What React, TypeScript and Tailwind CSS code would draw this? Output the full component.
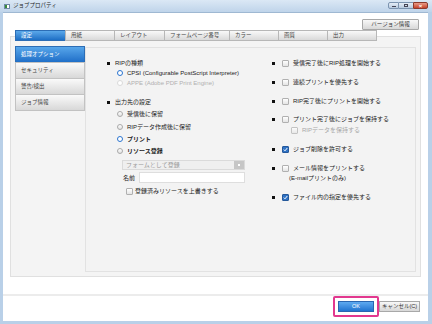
import React from 'react';

const font = "font-['Liberation_Sans','Noto_Sans_CJK_JP',sans-serif]";

const tabs = [
  { label: '設定', w: 'w-[51px]', active: true },
  { label: '用紙', w: 'w-[50px]' },
  { label: 'レイアウト', w: 'w-[51px]' },
  { label: 'フォームページ番号', w: 'w-[66px]' },
  { label: 'カラー', w: 'w-[50px]' },
  { label: '画質', w: 'w-[50px]' },
  { label: '出力', w: 'w-[50px]' },
];

const sideItems = ['処理オプション', 'セキュリティ', '警告/検出', 'ジョブ情報'];

const Bullet = () => <span className="w-[3px] h-[3px] bg-[#111] shrink-0" />;

const Radio = ({ checked, disabled }: { checked?: boolean; disabled?: boolean }) => (
  <span
    className={`block w-[6px] h-[6px] rounded-full shrink-0 bg-white ${
      checked ? 'border-[1.5px] border-[#2a74d0]' : disabled ? 'border border-[#dadada]' : 'border border-[#a9a9a9] bg-gradient-to-b from-white to-[#e2e2e2]'
    }`}
  />
);

const Check = ({ checked }: { checked?: boolean }) =>
  checked ? (
    <span className="w-[7px] h-[7px] rounded-[1px] bg-[#2f72c4] border border-[#25589a] shrink-0 flex items-center justify-center">
      <svg width="5" height="5" viewBox="0 0 5 5">
        <path d="M0.8 2.6 L2 3.8 L4.3 1" stroke="white" strokeWidth="1" fill="none" />
      </svg>
    </span>
  ) : (
    <span className="block w-[7px] h-[7px] rounded-[1px] border border-[#b0b0b0] bg-gradient-to-b from-white to-[#e4e4e4] shrink-0" />
  );

const RightRow = ({ label, checked, className = '' }: { label: string; checked?: boolean; className?: string }) => (
  <div className={`h-[10px] flex items-center ${className}`}>
    <Bullet />
    <span className="ml-[7px] flex"><Check checked={checked} /></span>
    <span className="ml-[4px]">{label}</span>
  </div>
);

export default function App() {
  return (
    <div className={`w-[432px] h-[324px] bg-[#b9d0e8] flex flex-col text-[6px] text-[#222] leading-none ${font}`}>
      {/* Title bar */}
      <div className="h-[12px] flex items-center bg-gradient-to-b from-[#dbe8f5] to-[#bfd4ea] pl-[4px]">
        <span className="w-[6px] h-[5px] border border-[#6f8aa6] bg-white flex">
          <span className="w-[2px] h-full bg-[#3a8a3a]" />
        </span>
        <span className="ml-[3px] text-[5.5px] text-[#222]">ジョブプロパティ</span>
        <div className="ml-auto flex items-start h-full pt-[2px] pr-[4px]">
          <span className="w-[11px] h-[7px] border border-[#7c94b0] rounded-l-[2px] bg-gradient-to-b from-[#e6eef7] to-[#b6c9de] flex items-end justify-center pb-[1px]">
            <span className="w-[4px] h-[1px] bg-[#445]" />
          </span>
          <span className="w-[14px] h-[7px] border-y border-[#7c94b0] bg-gradient-to-b from-[#e6eef7] to-[#b6c9de] flex items-center justify-center">
            <span className="w-[4px] h-[3px] border border-[#445]" />
          </span>
          <span className="w-[15px] h-[7px] border border-[#8a3a2e] rounded-r-[2px] bg-gradient-to-b from-[#e89a86] to-[#c4402a] flex items-center justify-center text-white text-[6px] font-bold">
            ×
          </span>
        </div>
      </div>

      {/* Window body */}
      <div className="flex-1 flex flex-col bg-white ml-[3px] mr-[4px] mb-[3px] border-t border-[#9fb8d2]">
        <div className="flex justify-end mt-[6px] mr-[9px]">
          <button className="w-[57px] h-[11px] border border-[#a8a8a8] rounded-[1px] bg-gradient-to-b from-[#f8f8f8] to-[#d8d8d8] text-[5.5px] text-[#333] text-center">
            バージョン情報
          </button>
        </div>

        <div className="ml-[7px] mr-[7px] flex flex-col">
          <div className="relative z-10 flex pl-[5px] h-[11px]">
            {tabs.map((t) => (
              <div
                key={t.label}
                className={`${t.w} h-full -ml-px first:ml-0 flex items-center pl-[5px] text-[5.5px] border ${
                  t.active
                    ? 'bg-gradient-to-b from-[#5aa8ea] to-[#1d6fc5] border-[#2c6db5] text-white'
                    : 'bg-gradient-to-b from-[#f9f9f9] to-[#d9d9d9] border-[#b7b7b7] text-[#444]'
                }`}
              >
                {t.label}
              </div>
            ))}
          </div>

          <div className="-mt-[5px] h-[241px] border border-[#e0e0e0] bg-[#f4f4f4] pt-[9px] px-[4px] pb-[4px] flex">
            {/* Sidebar */}
            <div className="w-[70px] flex flex-col">
              {sideItems.map((s, i) => (
                <div
                  key={s}
                  className={`h-[17px] -mt-px first:mt-0 flex items-center pl-[5px] text-[5.5px] border ${
                    i === 0
                      ? 'bg-gradient-to-b from-[#57a6ea] to-[#1f6fc8] border-[#2c6db5] text-white'
                      : 'bg-gradient-to-b from-[#fafafa] to-[#d8d8d8] border-[#c2c2c2] text-[#444]'
                  }`}
                >
                  {s}
                </div>
              ))}
            </div>

            {/* Main */}
            <div className="flex-1 mt-[1px] border border-[#e2e2e2] bg-[#f3f3f3] flex pl-[21px]">
              {/* Left column */}
              <div className="w-[165px] flex flex-col pt-[10px]">
                <div className="h-[10px] flex items-center">
                  <Bullet />
                  <span className="ml-[5px]">RIPの種類</span>
                </div>
                <div className="h-[10px] flex items-center pl-[10px]">
                  <Radio checked />
                  <span className="ml-[4px]">CPSI (Configurable PostScript Interpreter)</span>
                </div>
                <div className="h-[10px] flex items-center pl-[10px] text-[#b0b0b0]">
                  <Radio disabled />
                  <span className="ml-[4px]">APPE (Adobe PDF Print Engine)</span>
                </div>
                <div className="h-[10px] mt-[9px] flex items-center">
                  <Bullet />
                  <span className="ml-[5px]">出力先の設定</span>
                </div>
                <div className="h-[13px] flex items-center pl-[10px]">
                  <Radio />
                  <span className="ml-[4px]">受信後に保留</span>
                </div>
                <div className="h-[13px] flex items-center pl-[10px]">
                  <Radio />
                  <span className="ml-[4px]">RIPデータ作成後に保留</span>
                </div>
                <div className="h-[12px] flex items-center pl-[10px] font-bold">
                  <Radio checked />
                  <span className="ml-[4px]">プリント</span>
                </div>
                <div className="h-[12px] flex items-center pl-[10px] font-bold">
                  <Radio />
                  <span className="ml-[4px]">リソース登録</span>
                </div>
                <div className="ml-[15px] mt-[3px] w-[123px] h-[10px] border border-[#dadada] bg-[#efefef] flex items-center">
                  <span className="pl-[3px] text-[#9a9a9a] flex-1">フォームとして登録</span>
                  <span className="w-[10px] h-full bg-[#c6c6c6] flex items-center justify-center">
                    <span className="w-[2px] h-[2px] bg-white" />
                  </span>
                </div>
                <div className="ml-[16px] mt-[2px] flex items-center h-[11px]">
                  <span className="w-[16px]">名前</span>
                  <span className="w-[106px] h-full border border-[#dedede] bg-white" />
                </div>
                <div className="ml-[19px] mt-[3px] h-[10px] flex items-center">
                  <Check />
                  <span className="ml-[2px]">登録済みリソースを上書きする</span>
                </div>
              </div>

              {/* Right column */}
              <div className="flex flex-col pt-[10px]">
                <RightRow label="受信完了後にRIP処理を開始する" />
                <RightRow label="連続プリントを優先する" className="mt-[9px]" />
                <RightRow label="RIP完了後にプリントを開始する" className="mt-[9px]" />
                <RightRow label="プリント完了後にジョブを保持する" className="mt-[8px]" />
                <div className="h-[10px] flex items-center pl-[19px] mt-[1px] text-[#a8a8a8]">
                  <span className="flex opacity-70"><Check /></span>
                  <span className="ml-[4px]">RIPデータを保持する</span>
                </div>
                <RightRow label="ジョブ削除を許可する" checked className="mt-[9px]" />
                <RightRow label="メール情報をプリントする" className="mt-[9px]" />
                <div className="h-[10px] flex items-center pl-[17px]">(E-mailプリントのみ)</div>
                <RightRow label="ファイル内の指定を優先する" checked className="mt-[9px]" />
              </div>
            </div>
          </div>
        </div>

        {/* Footer */}
        <div className="mt-[17px] border-t-2 border-[#ececec] flex justify-end pt-[5px] pr-[8px]">
          <div className="relative">
            <button className="w-[36px] h-[11px] border border-[#2a66b0] bg-gradient-to-b from-[#5eaaf0] to-[#1f74d0] text-white text-[5.5px]">
              OK
            </button>
            <span className="absolute -left-[5px] -right-[5px] -top-[5px] -bottom-[5px] border-[2.5px] border-[#e2388f] rounded-[2px]" />
          </div>
          <button className="ml-[5px] w-[41px] h-[11px] border border-[#a8a8a8] bg-gradient-to-b from-[#f8f8f8] to-[#d8d8d8] text-[#333] text-[5.5px]">
            キャンセル(C)
          </button>
        </div>
      </div>
    </div>
  );
}
